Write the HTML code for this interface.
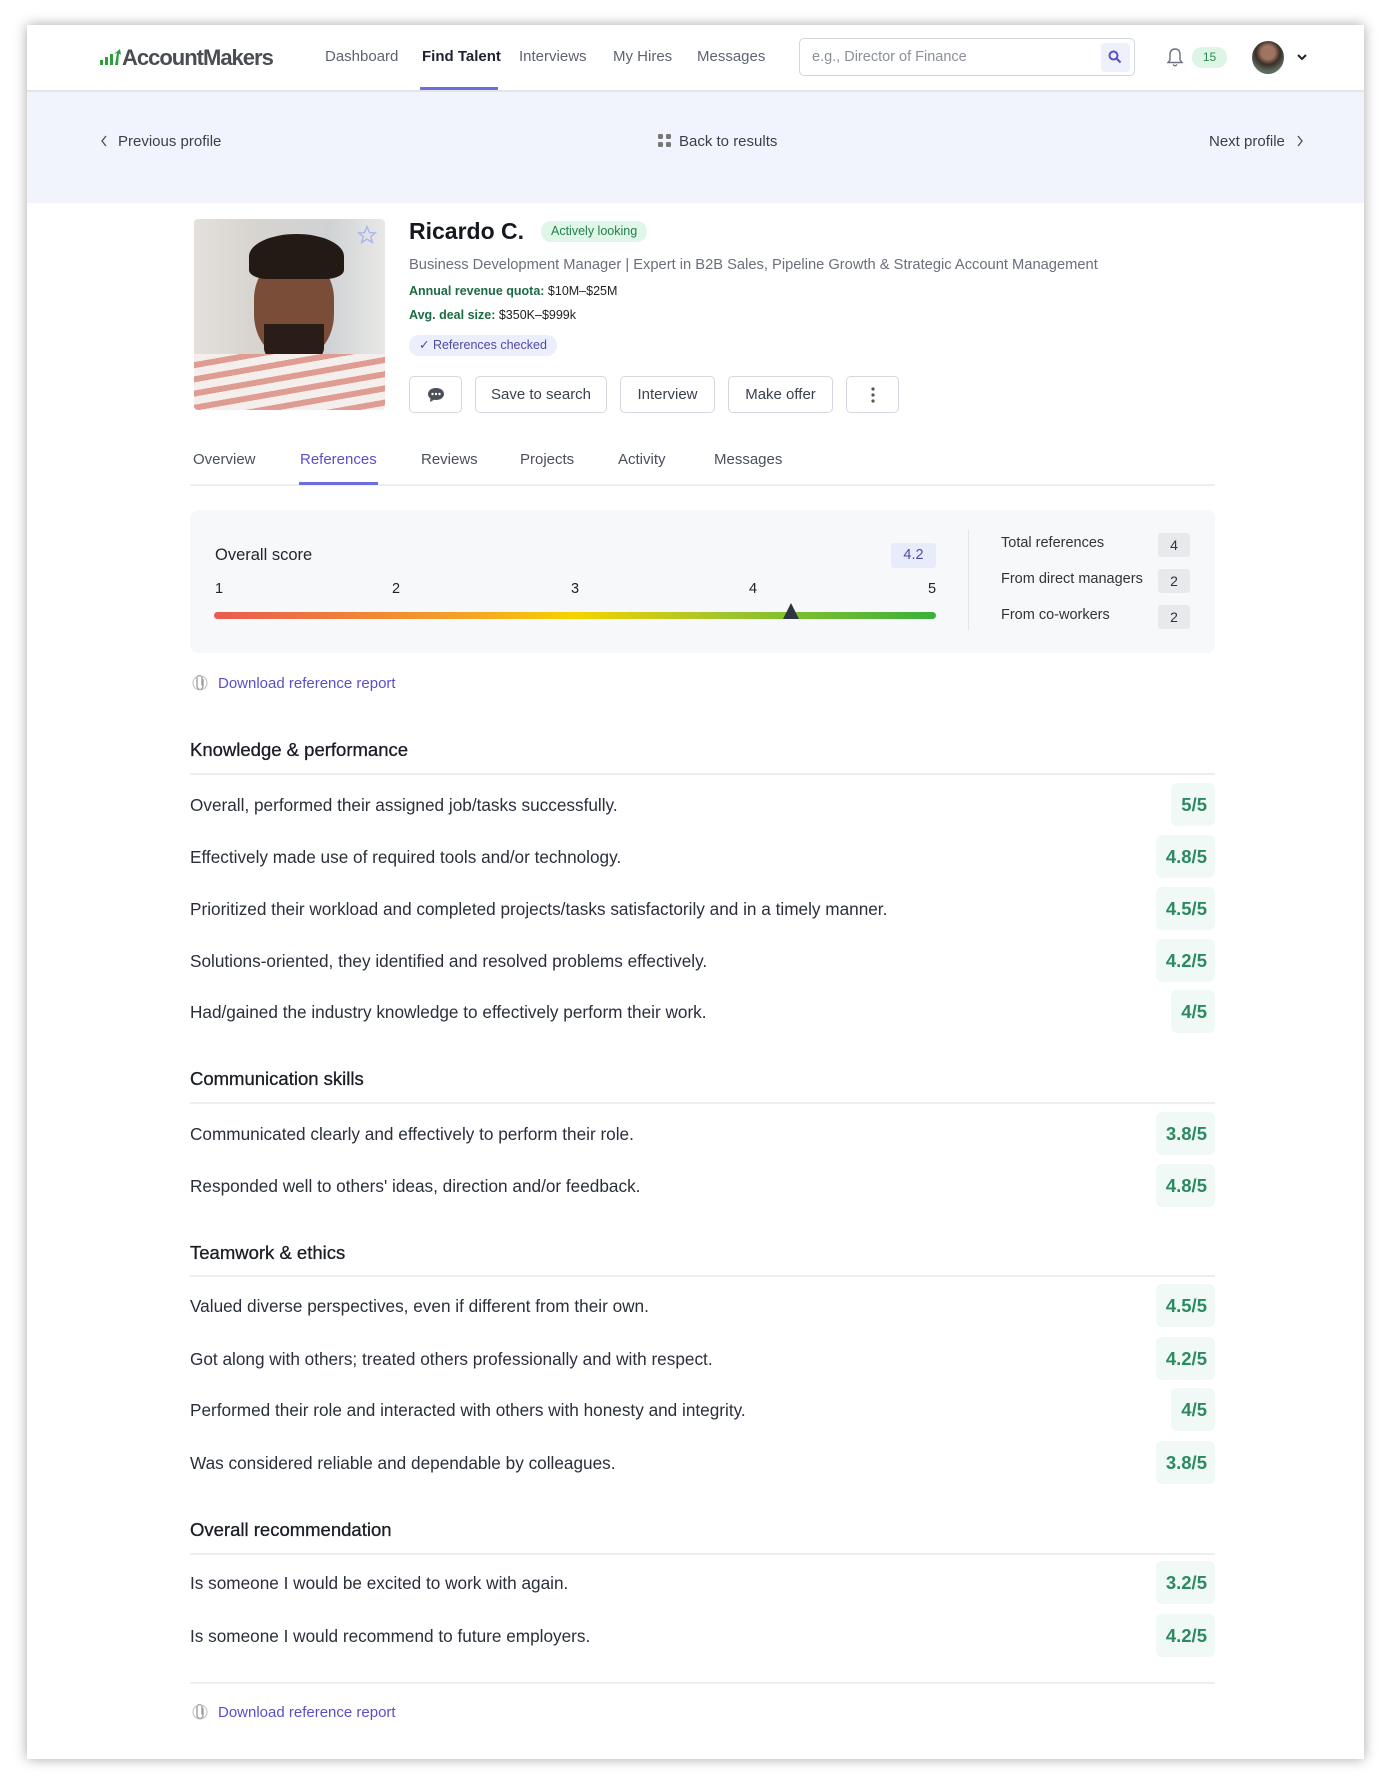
<!DOCTYPE html>
<html><head><meta charset="utf-8">
<style>
*{box-sizing:border-box;margin:0;padding:0}
body{width:1391px;height:1787px;background:#fff;font-family:"Liberation Sans",sans-serif;color:#2a2f3a;position:relative;overflow:hidden}
.card{position:absolute;left:27px;top:25px;width:1337px;height:1734px;background:#fff;box-shadow:0 0 12px rgba(0,0,0,.35)}
.a{position:absolute;white-space:nowrap}
.nav{font-size:15px;color:#5d6370;top:48px}
.band{position:absolute;left:0;top:65px;width:1337px;height:113px;background:#f1f4fc;border-top:2px solid #e3e5ea}
.btn{position:absolute;top:376px;height:37px;border:1px solid #d4d7dd;border-radius:5px;font-size:15px;color:#3c414c;display:flex;align-items:center;justify-content:center;background:#fff}
.tab{position:absolute;top:451px;font-size:15px;color:#4a4f5a}
.row{position:absolute;left:190px;font-size:17.2px;color:#2a2f3a}
.sc{position:absolute;right:176px;height:43px;background:#f1f9f6;border-radius:6px;color:#2b8a62;font-weight:bold;font-size:18.5px;display:flex;align-items:center;justify-content:flex-end;padding:0 8px 0 10px}
.h{position:absolute;left:190px;font-size:18.5px;color:#1a1d24;-webkit-text-stroke:0.3px #1a1d24}
.rule{position:absolute;left:190px;width:1025px;height:2px;background:#eceef1}
.num{position:absolute;top:581px;font-size:14.5px;color:#222}
.st{position:absolute;left:1001px;font-size:14.5px;color:#333}
.sv{position:absolute;left:1158px;width:32px;height:24px;background:#e8e9ec;border-radius:3px;font-size:14px;text-align:center;line-height:24px;color:#333}
.dl{position:absolute;left:190px;font-size:15px;color:#5b4fc9}
</style></head><body>
<div class="card"></div>
<svg class="a" style="left:100px;top:49px" width="22" height="16" viewBox="0 0 22 16"><rect x="0" y="11" width="3" height="5" fill="#2e9e3e"/><rect x="5" y="8" width="3" height="8" fill="#2e9e3e"/><rect x="10" y="5" width="3" height="11" fill="#2e9e3e"/><path d="M15 16 L17 4 L14 5 L20 0 L21 6 L19 4.5 L18 16Z" fill="#2e9e3e"/></svg>
<div class="a" style="left:122px;top:45px;font-size:22px;font-weight:bold;color:#4a4d52;letter-spacing:-1px">AccountMakers</div>
<div class="a nav" style="left:325px">Dashboard</div>
<div class="a nav" style="left:422px;color:#1f2330;font-weight:bold">Find Talent</div>
<div class="a" style="left:420px;top:87px;width:78px;height:3px;background:#6a6ee0"></div>
<div class="a nav" style="left:519px">Interviews</div>
<div class="a nav" style="left:613px">My Hires</div>
<div class="a nav" style="left:697px">Messages</div>
<div class="a" style="left:799px;top:38px;width:336px;height:38px;border:1px solid #d3d6dc;border-radius:5px"></div>
<div class="a" style="left:812px;top:49px;font-size:14.5px;color:#8a8f99">e.g., Director of Finance</div>
<div class="a" style="left:1101px;top:43px;width:29px;height:29px;background:#eef0fc;border-radius:4px"></div>
<svg class="a" style="left:1108px;top:50px" width="14" height="14" viewBox="0 0 14 14"><circle cx="5.5" cy="5.5" r="4" fill="none" stroke="#5b4fc9" stroke-width="2"/><path d="M8.5 8.5 L12.5 12.5" stroke="#5b4fc9" stroke-width="2.2"/></svg>
<svg class="a" style="left:1166px;top:47px" width="18" height="21" viewBox="0 0 18 21"><path d="M9 2 C5 2 4 5 4 8 L4 13 L2 15.5 L16 15.5 L14 13 L14 8 C14 5 13 2 9 2Z" fill="none" stroke="#6b7080" stroke-width="1.4"/><path d="M7 17.5 Q9 20 11 17.5" fill="none" stroke="#6b7080" stroke-width="1.4"/></svg>
<div class="a" style="left:1192px;top:47px;width:35px;height:21px;background:#def5e6;border-radius:10px;font-size:12px;color:#2b8a52;text-align:center;line-height:21px">15</div>
<div class="a" style="left:1252px;top:41px;width:32px;height:33px;border-radius:50%;background:radial-gradient(circle at 50% 35%,#a07560 0 25%,#3a2e28 45%,#5d6a60 70%)"></div>
<svg class="a" style="left:1296px;top:53px" width="12" height="9" viewBox="0 0 12 9"><path d="M2 2 L6 6 L10 2" fill="none" stroke="#222" stroke-width="2"/></svg>
<div class="band" style="left:27px;top:90px;position:absolute"></div>
<svg class="a" style="left:100px;top:135px" width="8" height="12" viewBox="0 0 8 12"><path d="M6 1 L2 6 L6 11" fill="none" stroke="#555" stroke-width="1.4"/></svg>
<div class="a" style="left:118px;top:133px;font-size:15px;color:#3a3f4a">Previous profile</div>
<svg class="a" style="left:658px;top:134px" width="14" height="14" viewBox="0 0 14 14"><g fill="#777"><rect x="0" y="0" width="5" height="5" rx="1.5"/><rect x="8" y="0" width="5" height="5" rx="1.5"/><rect x="0" y="8" width="5" height="5" rx="1.5"/><rect x="8" y="8" width="5" height="5" rx="1.5"/></g></svg>
<div class="a" style="left:679px;top:133px;font-size:15px;color:#3a3f4a">Back to results</div>
<div class="a" style="left:1209px;top:133px;font-size:15px;color:#3a3f4a">Next profile</div>
<svg class="a" style="left:1296px;top:135px" width="8" height="12" viewBox="0 0 8 12"><path d="M2 1 L6 6 L2 11" fill="none" stroke="#555" stroke-width="1.4"/></svg>
<div class="a" style="left:194px;top:219px;width:191px;height:191px;border-radius:4px;overflow:hidden;background:linear-gradient(90deg,#e4e0dc,#d8d4d0 30%,#cfd2d4 70%,#e8e8e6)">
<div style="position:absolute;left:60px;top:40px;width:80px;height:100px;border-radius:40% 40% 45% 45%;background:#7a4d38"></div>
<div style="position:absolute;left:55px;top:15px;width:95px;height:45px;border-radius:50% 50% 20% 20%;background:#231a16"></div>
<div style="position:absolute;left:70px;top:105px;width:60px;height:40px;border-radius:0 0 40% 40%;background:#2a1d18"></div>
<div style="position:absolute;left:0;top:135px;width:191px;height:56px;background:repeating-linear-gradient(170deg,#f4efec 0 8px,#df9c92 8px 14px)"></div>
</div>
<svg class="a" style="left:357px;top:225px" width="20" height="20" viewBox="0 0 24 24"><path d="M12 2 L15 9 L22 9.5 L16.5 14 L18.5 21 L12 17 L5.5 21 L7.5 14 L2 9.5 L9 9Z" fill="none" stroke="#a9b4f0" stroke-width="1.6"/></svg>
<div class="a" style="left:409px;top:218px;font-size:23px;font-weight:bold;color:#15181e">Ricardo C.</div>
<div class="a" style="left:541px;top:221px;height:21px;padding:0 10px;background:#e0f6e8;border-radius:10px;font-size:12.5px;color:#22804a;line-height:21px">Actively looking</div>
<div class="a" style="left:409px;top:257px;font-size:14.7px;color:#6a6f7a">Business Development Manager | Expert in B2B Sales, Pipeline Growth &amp; Strategic Account Management</div>
<div class="a" style="left:409px;top:284px;font-size:12.5px;color:#222"><b style="color:#1d6b44">Annual revenue quota:</b> $10M–$25M</div>
<div class="a" style="left:409px;top:308px;font-size:12.5px;color:#222"><b style="color:#1d6b44">Avg. deal size:</b> $350K–$999k</div>
<div class="a" style="left:409px;top:335px;height:21px;padding:0 10px;background:#eceefc;border-radius:10px;font-size:12.5px;color:#4e4aa8;line-height:21px">✓ References checked</div>
<div class="btn" style="left:409px;width:53px"><svg width="18" height="16" viewBox="0 0 18 16"><path d="M9 1 C4 1 1 3.8 1 7 C1 9 2 10.5 3.5 11.5 L3 15 L7 12.8 C7.6 12.9 8.3 13 9 13 C14 13 17 10.2 17 7 C17 3.8 14 1 9 1Z" fill="#4a4f5a"/><circle cx="5.5" cy="7" r="1.2" fill="#fff"/><circle cx="9" cy="7" r="1.2" fill="#fff"/><circle cx="12.5" cy="7" r="1.2" fill="#fff"/></svg></div>
<div class="btn" style="left:475px;width:132px">Save to search</div>
<div class="btn" style="left:620px;width:95px">Interview</div>
<div class="btn" style="left:728px;width:105px">Make offer</div>
<div class="btn" style="left:846px;width:53px"><svg width="4" height="16" viewBox="0 0 4 16"><circle cx="2" cy="2" r="1.6" fill="#555"/><circle cx="2" cy="8" r="1.6" fill="#555"/><circle cx="2" cy="14" r="1.6" fill="#555"/></svg></div>
<div class="tab" style="left:193px">Overview</div>
<div class="tab" style="left:300px;color:#5b4fc9">References</div>
<div class="tab" style="left:421px">Reviews</div>
<div class="tab" style="left:520px">Projects</div>
<div class="tab" style="left:618px">Activity</div>
<div class="tab" style="left:714px">Messages</div>
<div class="rule" style="top:484px"></div>
<div class="a" style="left:299px;top:482px;width:79px;height:3px;background:#6a6ee0"></div>
<div class="a" style="left:190px;top:510px;width:1025px;height:143px;background:#f7f8fa;border-radius:8px"></div>
<div class="a" style="left:215px;top:546px;font-size:16.5px;color:#22262e">Overall score</div>
<div class="a" style="left:891px;top:543px;width:45px;height:25px;background:#e8ebfb;border-radius:3px;font-size:14.5px;color:#4e4aa8;text-align:center;line-height:25px">4.2</div>
<div class="num" style="left:215px">1</div>
<div class="num" style="left:392px">2</div>
<div class="num" style="left:571px">3</div>
<div class="num" style="left:749px">4</div>
<div class="num" style="left:928px">5</div>
<div class="a" style="left:214px;top:612px;width:722px;height:7px;border-radius:4px;background:linear-gradient(90deg,#ea5a50,#f4a325 35%,#f6d200 50%,#a4c52a 70%,#39b03a)"></div>
<svg class="a" style="left:782px;top:603px" width="18" height="16" viewBox="0 0 18 16"><path d="M9 0 L17 16 L1 16Z" fill="#2e3440"/></svg>
<div class="a" style="left:968px;top:530px;width:1px;height:100px;background:#e2e4e8"></div>
<div class="st" style="top:535px">Total references</div><div class="sv" style="top:533px">4</div>
<div class="st" style="top:571px">From direct managers</div><div class="sv" style="top:569px">2</div>
<div class="st" style="top:607px">From co-workers</div><div class="sv" style="top:605px">2</div>
<svg class="a" style="left:192px;top:674px" width="16" height="18" viewBox="0 0 16 18"><path d="M11 5 L11 12 C11 14 9.5 15.5 8 15.5 C6.5 15.5 5 14 5 12 L5 4 C5 2.5 6 1.5 7.5 1.5 C9 1.5 10 2.5 10 4 L10 11.5" fill="none" stroke="#999" stroke-width="1.3"/><circle cx="8" cy="9" r="7" fill="none" stroke="#bbb" stroke-width="1"/></svg>
<div class="dl" style="top:675px;left:218px">Download reference report</div>
<div class="h" style="top:739px">Knowledge &amp; performance</div><div class="rule" style="top:773px"></div>
<div class="row" style="top:795px">Overall, performed their assigned job/tasks successfully.</div><div class="sc" style="top:783px">5/5</div>
<div class="row" style="top:847px">Effectively made use of required tools and/or technology.</div><div class="sc" style="top:835px">4.8/5</div>
<div class="row" style="top:899px">Prioritized their workload and completed projects/tasks satisfactorily and in a timely manner.</div><div class="sc" style="top:887px">4.5/5</div>
<div class="row" style="top:951px">Solutions-oriented, they identified and resolved problems effectively.</div><div class="sc" style="top:939px">4.2/5</div>
<div class="row" style="top:1002px">Had/gained the industry knowledge to effectively perform their work.</div><div class="sc" style="top:990px">4/5</div>
<div class="h" style="top:1068px">Communication skills</div><div class="rule" style="top:1102px"></div>
<div class="row" style="top:1124px">Communicated clearly and effectively to perform their role.</div><div class="sc" style="top:1112px">3.8/5</div>
<div class="row" style="top:1176px">Responded well to others' ideas, direction and/or feedback.</div><div class="sc" style="top:1164px">4.8/5</div>
<div class="h" style="top:1242px">Teamwork &amp; ethics</div><div class="rule" style="top:1275px"></div>
<div class="row" style="top:1296px">Valued diverse perspectives, even if different from their own.</div><div class="sc" style="top:1284px">4.5/5</div>
<div class="row" style="top:1349px">Got along with others; treated others professionally and with respect.</div><div class="sc" style="top:1337px">4.2/5</div>
<div class="row" style="top:1400px">Performed their role and interacted with others with honesty and integrity.</div><div class="sc" style="top:1388px">4/5</div>
<div class="row" style="top:1453px">Was considered reliable and dependable by colleagues.</div><div class="sc" style="top:1441px">3.8/5</div>
<div class="h" style="top:1519px">Overall recommendation</div><div class="rule" style="top:1553px"></div>
<div class="row" style="top:1573px">Is someone I would be excited to work with again.</div><div class="sc" style="top:1561px">3.2/5</div>
<div class="row" style="top:1626px">Is someone I would recommend to future employers.</div><div class="sc" style="top:1614px">4.2/5</div>
<div class="rule" style="top:1682px"></div>
<svg class="a" style="left:192px;top:1703px" width="16" height="18" viewBox="0 0 16 18"><path d="M11 5 L11 12 C11 14 9.5 15.5 8 15.5 C6.5 15.5 5 14 5 12 L5 4 C5 2.5 6 1.5 7.5 1.5 C9 1.5 10 2.5 10 4 L10 11.5" fill="none" stroke="#999" stroke-width="1.3"/><circle cx="8" cy="9" r="7" fill="none" stroke="#bbb" stroke-width="1"/></svg>
<div class="dl" style="top:1704px;left:218px">Download reference report</div>
</body></html>
